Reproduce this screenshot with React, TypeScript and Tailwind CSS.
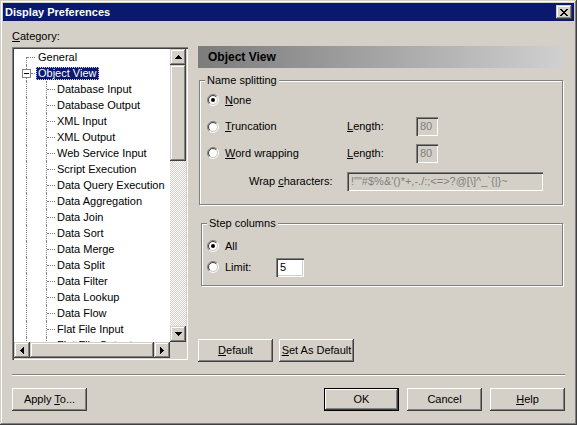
import React from 'react';

const raised =
  'shadow-[inset_-1px_-1px_0_#404040,inset_1px_1px_0_#fff,inset_-2px_-2px_0_#808080,inset_2px_2px_0_#d4d0c8]';
const scrollRaised =
  'shadow-[inset_-1px_-1px_0_#404040,inset_1px_1px_0_#d4d0c8,inset_-2px_-2px_0_#808080,inset_2px_2px_0_#fff]';
const sunken =
  'shadow-[inset_1px_1px_0_#808080,inset_2px_2px_0_#404040,inset_-1px_-1px_0_#fff,inset_-2px_-2px_0_#d4d0c8]';
const track =
  'bg-[conic-gradient(#fff_25%,#d4d0c8_0_50%,#fff_0_75%,#d4d0c8_0)] bg-[length:2px_2px]';

const children = [
  'Database Input',
  'Database Output',
  'XML Input',
  'XML Output',
  'Web Service Input',
  'Script Execution',
  'Data Query Execution',
  'Data Aggregation',
  'Data Join',
  'Data Sort',
  'Data Merge',
  'Data Split',
  'Data Filter',
  'Data Lookup',
  'Data Flow',
  'Flat File Input',
  'Flat File Output',
];

function U({ children }: { children: React.ReactNode }) {
  return <span className="underline underline-offset-[1px]">{children}</span>;
}

function Radio({ checked }: { checked?: boolean }) {
  return (
    <svg width="12" height="12" viewBox="0 0 12 12" className="shrink-0">
      <circle cx="6" cy="6" r="4" fill="#fff" />
      <path d="M2.111 9.889A5.5 5.5 0 0 1 9.889 2.111" fill="none" stroke="#808080" />
      <path d="M9.889 2.111A5.5 5.5 0 0 1 2.111 9.889" fill="none" stroke="#fff" />
      <path d="M2.818 9.182A4.5 4.5 0 0 1 9.182 2.818" fill="none" stroke="#404040" />
      <path d="M9.182 2.818A4.5 4.5 0 0 1 2.818 9.182" fill="none" stroke="#d4d0c8" />
      {checked && <circle cx="6" cy="6" r="2" fill="#000" />}
    </svg>
  );
}

function Btn({ children, def, className = '' }: { children: React.ReactNode; def?: boolean; className?: string }) {
  return (
    <div
      className={`flex h-[23px] w-[75px] shrink-0 items-center justify-center bg-[#d4d0c8] ${
        def ? 'border border-black' : ''
      } ${raised} ${className}`}
    >
      <span className="whitespace-nowrap">{children}</span>
    </div>
  );
}

function Field({ value, w, disabled }: { value: string; w: string; disabled?: boolean }) {
  return (
    <div
      className={`flex h-[19px] items-center overflow-hidden whitespace-nowrap pl-[4px] ${w} ${sunken} ${
        disabled ? 'bg-[#d4d0c8] text-[#808080]' : 'bg-white text-black'
      }`}
    >
      {value}
    </div>
  );
}

function Arrow({ dir }: { dir: 'up' | 'down' | 'left' | 'right' }) {
  const v = dir === 'up' || dir === 'down';
  const rows = [1, 3, 5, 7];
  return (
    <svg width={v ? 7 : 4} height={v ? 4 : 7} shapeRendering="crispEdges">
      {rows.map((n, i) => {
        const k = dir === 'up' || dir === 'left' ? i : 3 - i;
        const off = (7 - n) / 2;
        return v ? (
          <rect key={i} x={off} y={k} width={n} height={1} fill="#000" />
        ) : (
          <rect key={i} x={k} y={off} width={1} height={n} fill="#000" />
        );
      })}
    </svg>
  );
}

function ScrollBtn({ dir }: { dir: 'up' | 'down' | 'left' | 'right' }) {
  return (
    <div className={`flex size-[16px] shrink-0 items-center justify-center bg-[#d4d0c8] ${scrollRaised}`}>
      <Arrow dir={dir} />
    </div>
  );
}

function Tree() {
  return (
    <div className={`h-[313px] w-[176px] bg-white p-[2px] ${sunken}`}>
      <div className="grid grid-cols-[156px_16px] grid-rows-[293px_16px]">
        <div className="overflow-hidden bg-white">
          {/* General */}
          <div className="relative flex h-[16px] items-center">
            <span className="absolute left-[12px] top-[8px] h-[8px] border-l border-dotted border-[#808080]" />
            <span className="absolute left-[13px] top-[8px] w-[8px] border-t border-dotted border-[#808080]" />
            <span className="ml-[22px] border border-transparent px-[1px] leading-[11px]">General</span>
          </div>
          {/* Object View */}
          <div className="relative flex h-[16px] items-center">
            <span className="absolute left-[12px] top-0 h-[4px] border-l border-dotted border-[#808080]" />
            <span className="absolute left-[12px] top-[13px] h-[3px] border-l border-dotted border-[#808080]" />
            <span className="absolute left-[8px] top-[4px] flex size-[9px] items-center justify-center border border-[#808080] bg-white">
              <span className="h-px w-[5px] bg-black" />
            </span>
            <span className="absolute left-[17px] top-[8px] w-[4px] border-t border-dotted border-[#808080]" />
            <span className="ml-[22px] border border-dotted border-[#e8d9a0] bg-[#0a196e] px-[1px] leading-[11px] text-white">
              Object View
            </span>
          </div>
          {children.map((c) => (
            <div key={c} className="relative flex h-[16px] items-center whitespace-nowrap">
              <span className="absolute left-[12px] top-0 h-[16px] border-l border-dotted border-[#808080]" />
              <span className="absolute left-[32px] top-0 h-[16px] border-l border-dotted border-[#808080]" />
              <span className="absolute left-[33px] top-[8px] w-[8px] border-t border-dotted border-[#808080]" />
              <span className="ml-[41px] border border-transparent px-[1px] leading-[11px]">{c}</span>
            </div>
          ))}
        </div>
        <div className="flex flex-col">
          <ScrollBtn dir="up" />
          <div className={`h-[96px] bg-[#d4d0c8] ${scrollRaised}`} />
          <div className={`flex-1 ${track}`} />
          <ScrollBtn dir="down" />
        </div>
        <div className="flex">
          <ScrollBtn dir="left" />
          <div className={`flex-1 bg-[#d4d0c8] ${scrollRaised}`} />
          <ScrollBtn dir="right" />
        </div>
        <div className="bg-[#d4d0c8]" />
      </div>
    </div>
  );
}

export default function App() {
  return (
    <div
      className={`flex h-[425px] w-[577px] flex-col bg-[#d4d0c8] p-[3px] font-['Liberation_Sans',Arial,sans-serif] text-[11px] leading-[13px] text-black shadow-[inset_-1px_-1px_0_#404040,inset_1px_1px_0_#d4d0c8,inset_-2px_-2px_0_#808080,inset_2px_2px_0_#fff]`}
    >
      {/* Title bar */}
      <div className="flex h-[18px] items-center justify-between bg-[#0a196e] pl-[2px] pr-[2px]">
        <span className="text-[11px] font-bold text-white">Display Preferences</span>
        <div className={`flex h-[14px] w-[16px] items-center justify-center bg-[#d4d0c8] ${scrollRaised}`}>
          <svg width="8" height="7" viewBox="0 0 8 7" shapeRendering="crispEdges">
            <path d="M0 0h2v1h1v1h2V1h1V0h2v1H7v1H6v1H5v1h1v1h1v1h1v1H6V6H5V5H3v1H2v1H0V6h1V5h1V4h1V3H2V2H1V1H0z" fill="#000" />
          </svg>
        </div>
      </div>

      <div className="flex px-[9px] pt-[7px]">
        {/* Left column */}
        <div className="flex w-[176px] flex-col">
          <div className="h-[19px] pt-[2px]">
            <U>C</U>ategory:
          </div>
          <Tree />
        </div>

        {/* Right column */}
        <div className="ml-[10px] mt-[18px] flex h-[316px] w-[367px] flex-col">
          <div className="mr-[2px] flex h-[22px] items-center bg-linear-to-r from-[#7c7c7c] to-[#d0d0d0] pl-[10px] text-[12px] font-bold">
            Object View
          </div>

          <fieldset className="ml-[1px] mt-[6px] w-[364px] border border-[#808080] pb-[13px] pt-[1px] shadow-[inset_1px_1px_0_#fff,1px_1px_0_#fff]">
            <legend className="ml-[5px] bg-[#d4d0c8] px-[2px] leading-[12px]">Name splitting</legend>
            <div className="flex h-[26px] items-center pl-[7px]">
              <Radio checked />
              <span className="ml-[6px]">
                <U>N</U>one
              </span>
            </div>
            <div className="flex h-[27px] items-center pl-[7px]">
              <Radio />
              <span className="ml-[6px] w-[122px]">
                <U>T</U>runcation
              </span>
              <span className="w-[69px]">
                <U>L</U>ength:
              </span>
              <Field value="80" w="w-[22px]" disabled />
            </div>
            <div className="flex h-[26px] items-center pl-[7px]">
              <Radio />
              <span className="ml-[6px] w-[122px]">
                <U>W</U>ord wrapping
              </span>
              <span className="w-[69px]">
                <U>L</U>ength:
              </span>
              <Field value="80" w="w-[22px]" disabled />
            </div>
            <div className="mt-[6px] flex items-center pl-[49px]">
              <span className="w-[98px]">
                Wrap <U>c</U>haracters:
              </span>
              <Field value={'!""#$%&\'()*+,-./:;<=>?@[\\]^_`{|}~'} w="w-[196px]" disabled />
            </div>
          </fieldset>

          <fieldset className="ml-[3px] mt-[12px] w-[362px] border border-[#808080] pb-[8px] pt-[6px] shadow-[inset_1px_1px_0_#fff,1px_1px_0_#fff]">
            <legend className="ml-[5px] bg-[#d4d0c8] px-[2px] leading-[12px]">Step columns</legend>
            <div className="flex h-[22px] items-center pl-[5px]">
              <Radio checked />
              <span className="ml-[6px]">All</span>
            </div>
            <div className="flex h-[20px] items-center pl-[5px]">
              <Radio />
              <span className="ml-[6px] w-[51px]">Limit:</span>
              <Field value="5" w="w-[28px]" />
            </div>
          </fieldset>

          <div className="mt-auto flex gap-[6px]">
            <Btn>
              <U>D</U>efault
            </Btn>
            <Btn>
              <U>S</U>et As Default
            </Btn>
          </div>
        </div>
      </div>

      {/* Separator */}
      <div className="mx-[9px] mt-[12px] h-[2px] border-t border-b border-t-[#808080] border-b-white" />

      <div className="mt-[12px] flex px-[9px]">
        <Btn>
          Apply <U>T</U>o...
        </Btn>
        <div className="ml-auto flex gap-[8px]">
          <Btn def>OK</Btn>
          <Btn>Cancel</Btn>
          <Btn>
            <U>H</U>elp
          </Btn>
        </div>
      </div>
    </div>
  );
}
